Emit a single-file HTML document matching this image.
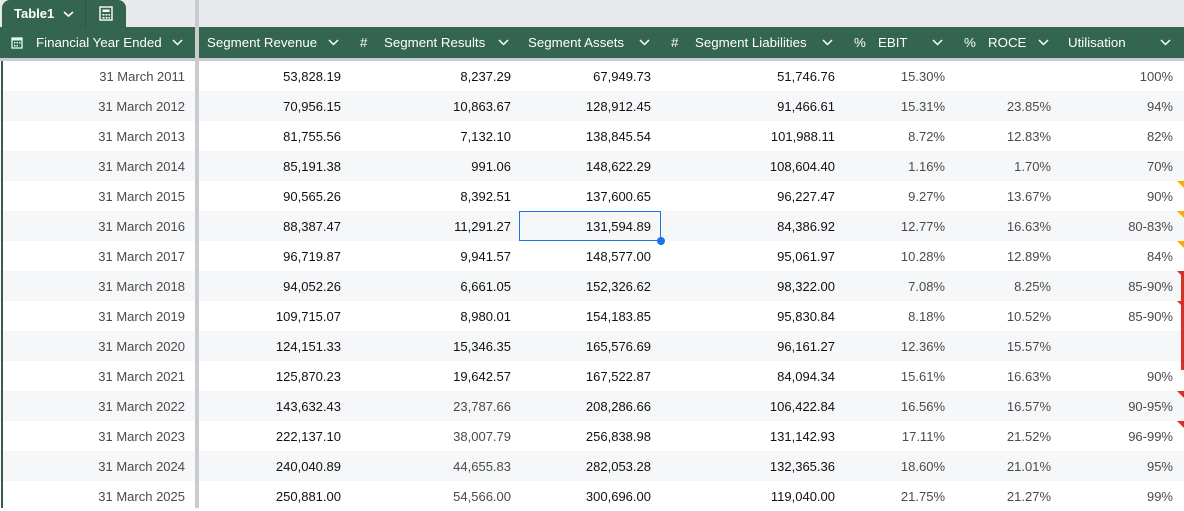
<!DOCTYPE html><html><head><style>
*{margin:0;padding:0;box-sizing:border-box}
body{width:1184px;height:508px;overflow:hidden;background:#fff;font-family:"Liberation Sans",sans-serif;font-size:13px;position:relative;color:#111}
.top{position:absolute;left:0;top:0;width:1184px;height:27px;background:#e8e9ec}
.tab{position:absolute;left:2px;top:0;width:124px;height:27px;background:#336551;border-radius:8px 8px 0 0;color:#fff;font-weight:bold;font-size:13px}
.hdr{position:absolute;left:0;top:27px;width:1184px;height:31px;background:#336551;color:#fff;font-size:13.3px}
.hdr span{position:absolute;top:8px}
.chev{position:absolute;top:11px;width:11px;height:9px}
.sep{position:absolute;top:58px;left:0;width:1184px;height:3px;background:#c9cbcf}
.vd{position:absolute;left:195px;top:0;width:4px;height:508px;background:#c9cbcf}
.row{position:absolute;left:0;width:1184px;height:30px}
.row div{position:absolute;top:8px;text-align:right;white-space:nowrap}
.g{color:#4a4a4a}
.tri{position:absolute;right:0;width:0;height:0;border-left:7px solid transparent}
</style></head><body>
<div class="top"></div>
<div class="tab"><span style="position:absolute;left:12px;top:6px">Table1</span>
<svg style="position:absolute;left:61px;top:10px" width="11" height="8"><path d="M1 2l4.5 4 4.5-4" stroke="#fff" stroke-width="1.6" fill="none"/></svg>
<div style="position:absolute;left:83px;top:0;width:1px;height:27px;background:#2a5443"></div>
<svg style="position:absolute;left:96px;top:5px" width="16" height="16"><rect x="2" y="2" width="12" height="13" fill="none" stroke="#fff" stroke-width="1.4"/><rect x="4.5" y="4.5" width="7" height="2.5" fill="#fff"/><g fill="#fff"><rect x="4.5" y="9" width="2" height="1.5"/><rect x="7.5" y="9" width="2" height="1.5"/><rect x="10.5" y="9" width="1.5" height="1.5"/><rect x="4.5" y="12" width="2" height="1.5"/><rect x="7.5" y="12" width="2" height="1.5"/><rect x="10.5" y="12" width="1.5" height="1.5"/></g></svg>
</div>
<div class="hdr">
<svg style="position:absolute;left:11px;top:9px" width="12" height="13"><rect x="1" y="2" width="10" height="10" fill="none" stroke="#dfe" stroke-width="1.3"/><rect x="1" y="2" width="10" height="2.5" fill="#dfe"/><g fill="#dfe"><rect x="3" y="6" width="1.5" height="1.5"/><rect x="5.5" y="6" width="1.5" height="1.5"/><rect x="8" y="6" width="1.5" height="1.5"/><rect x="3" y="9" width="1.5" height="1.5"/><rect x="5.5" y="9" width="1.5" height="1.5"/></g></svg>
<span style="left:36px">Financial Year Ended</span>
<span style="left:207px">Segment Revenue</span>
<span style="left:360px">#</span><span style="left:384px">Segment Results</span>
<span style="left:528px">Segment Assets</span>
<span style="left:671px">#</span><span style="left:695px">Segment Liabilities</span>
<span style="left:854px">%</span><span style="left:878px">EBIT</span>
<span style="left:964px">%</span><span style="left:988px">ROCE</span>
<span style="left:1068px">Utilisation</span>
<svg class="chev" style="left:172px"><path d="M1 2l4.5 4.5 4.5-4.5" stroke="#fff" stroke-width="1.5" fill="none"/></svg>
<svg class="chev" style="left:328px"><path d="M1 2l4.5 4.5 4.5-4.5" stroke="#fff" stroke-width="1.5" fill="none"/></svg>
<svg class="chev" style="left:498px"><path d="M1 2l4.5 4.5 4.5-4.5" stroke="#fff" stroke-width="1.5" fill="none"/></svg>
<svg class="chev" style="left:639px"><path d="M1 2l4.5 4.5 4.5-4.5" stroke="#fff" stroke-width="1.5" fill="none"/></svg>
<svg class="chev" style="left:822px"><path d="M1 2l4.5 4.5 4.5-4.5" stroke="#fff" stroke-width="1.5" fill="none"/></svg>
<svg class="chev" style="left:932px"><path d="M1 2l4.5 4.5 4.5-4.5" stroke="#fff" stroke-width="1.5" fill="none"/></svg>
<svg class="chev" style="left:1038px"><path d="M1 2l4.5 4.5 4.5-4.5" stroke="#fff" stroke-width="1.5" fill="none"/></svg>
<svg class="chev" style="left:1160px"><path d="M1 2l4.5 4.5 4.5-4.5" stroke="#fff" stroke-width="1.5" fill="none"/></svg>
</div>
<div class="sep"></div>
<div id="rows"></div>
<div class="vd" style="top:0"></div>
<div style="position:absolute;left:1px;top:61px;width:2px;height:447px;background:#3b5a4d"></div>
<div style="position:absolute;left:519px;top:211px;width:142px;height:30px;border:1.5px solid #1a73e8"></div>
<div style="position:absolute;left:657px;top:237px;width:8px;height:8px;border-radius:50%;background:#1a73e8"></div>
<div style="position:absolute;left:1181px;top:271px;width:3px;height:99px;background:#d93025"></div>
<script>
var d=[["2011","53,828.19","8,237.29","67,949.73","51,746.76","15.30%","","100%",""],
["2012","70,956.15","10,863.67","128,912.45","91,466.61","15.31%","23.85%","94%",""],
["2013","81,755.56","7,132.10","138,845.54","101,988.11","8.72%","12.83%","82%",""],
["2014","85,191.38","991.06","148,622.29","108,604.40","1.16%","1.70%","70%",""],
["2015","90,565.26","8,392.51","137,600.65","96,227.47","9.27%","13.67%","90%","y"],
["2016","88,387.47","11,291.27","131,594.89","84,386.92","12.77%","16.63%","80-83%","y"],
["2017","96,719.87","9,941.57","148,577.00","95,061.97","10.28%","12.89%","84%","y"],
["2018","94,052.26","6,661.05","152,326.62","98,322.00","7.08%","8.25%","85-90%","r"],
["2019","109,715.07","8,980.01","154,183.85","95,830.84","8.18%","10.52%","85-90%","r"],
["2020","124,151.33","15,346.35","165,576.69","96,161.27","12.36%","15.57%","",""],
["2021","125,870.23","19,642.57","167,522.87","84,094.34","15.61%","16.63%","90%",""],
["2022","143,632.43","23,787.66","208,286.66","106,422.84","16.56%","16.57%","90-95%","r"],
["2023","222,137.10","38,007.79","256,838.98","131,142.93","17.11%","21.52%","96-99%","r"],
["2024","240,040.89","44,655.83","282,053.28","132,365.36","18.60%","21.01%","95%",""],
["2025","250,881.00","54,566.00","300,696.00","119,040.00","21.75%","21.27%","99%",""]];
var R=[185,341,511,651,835,945,1051,1173],h="";
d.forEach(function(r,i){var y=61+i*30;
h+='<div class="row" style="top:'+y+'px;background:'+(i%2?'#f6f7f9':'#fff')+'">';
var v=["31 March "+r[0],r[1],r[2],r[3],r[4],r[5],r[6],r[7]];
v.forEach(function(t,j){var c=(j==0||j>=5||(j==2&&i>=11))?'g':'';
h+='<div class="'+c+'" style="right:'+(1184-R[j])+'px">'+t+'</div>';});
if(r[8])h+='<span class="tri" style="top:0;border-top:7px solid '+(r[8]=='y'?'#f9ab00':'#d93025')+'"></span>';
h+='</div>';});
document.getElementById('rows').innerHTML=h;
</script>
</body></html>
